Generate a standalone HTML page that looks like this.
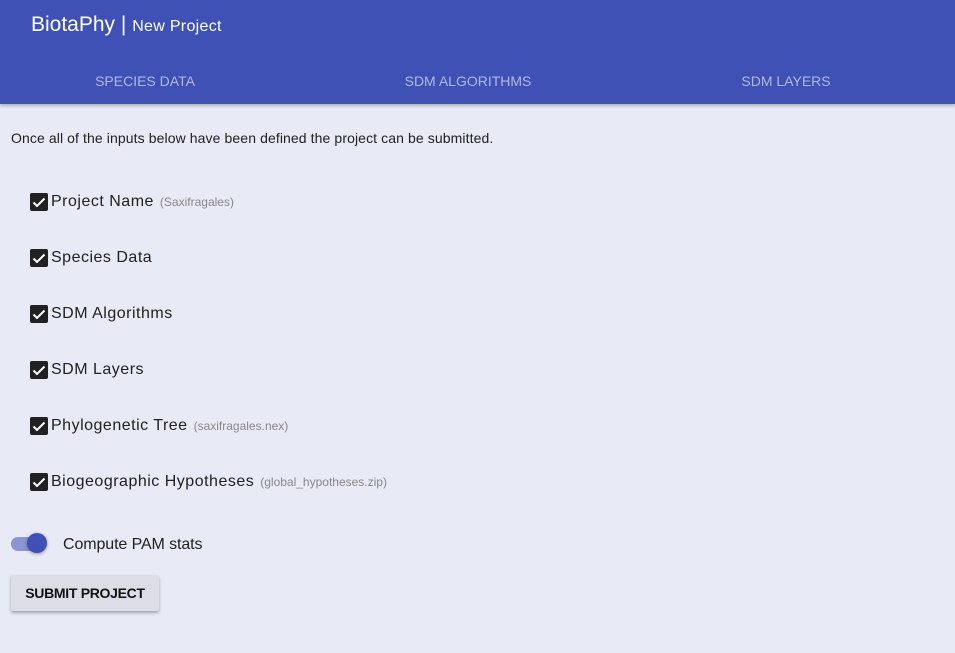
<!DOCTYPE html>
<html><head><style>
body{margin:0;width:955px;height:653px;background:#e8eaf6;font-family:"Liberation Sans",sans-serif;position:relative;overflow:hidden;color:#212121}
.hdr{position:absolute;left:0;top:0;width:955px;height:104px;background:#3f51b5;box-shadow:0 2px 3px rgba(0,0,0,.25)}
.title{position:absolute;left:31px;top:13px;color:#fff;font-size:21px}
.title small{font-size:16px;letter-spacing:.3px}
.tab{position:absolute;top:73px;color:#b0b9e6;font-size:14px;transform:translateX(-50%);white-space:nowrap}
.intro{position:absolute;left:11px;top:130px;font-size:14px;letter-spacing:.1px}
.row{position:absolute;left:30px;height:18px;display:flex;align-items:center;font-size:16px;letter-spacing:.5px;white-space:nowrap}
.cb{width:18px;height:18px;background:#212121;border-radius:2px;margin-right:3px;position:relative}
.cb svg{position:absolute;left:0;top:0}
.hint{font-size:12px;color:#888;margin-left:6px;letter-spacing:0}
.track{position:absolute;left:11px;top:537px;width:34px;height:14px;border-radius:7px;background:#8a95d2}
.knob{position:absolute;left:27px;top:533px;width:20px;height:20px;border-radius:50%;background:#3f51b5;box-shadow:0 1px 3px rgba(0,0,0,.4)}
.pam{position:absolute;left:63px;top:536px;font-size:16px;letter-spacing:-.1px}
.btn{position:absolute;left:11px;top:575px;width:148px;height:36px;background:#dcdde6;border-radius:2px;box-shadow:0 2px 3px rgba(0,0,0,.3);font-size:14px;font-weight:bold;text-align:center;line-height:36px;color:#111;letter-spacing:-.3px}
</style></head><body>
<div class="hdr">
<div class="title">BiotaPhy | <small>New Project</small></div>
<div class="tab" style="left:145px">SPECIES DATA</div>
<div class="tab" style="left:468px">SDM ALGORITHMS</div>
<div class="tab" style="left:786px">SDM LAYERS</div>
</div>
<div class="intro">Once all of the inputs below have been defined the project can be submitted.</div>
<div class="row" style="top:193px"><div class="cb"><svg width="18" height="18"><path d="M3.5 9.5l3.5 3.5 7.5-7.5" stroke="#fff" stroke-width="2" fill="none"/></svg></div>Project Name<span class="hint">(Saxifragales)</span></div>
<div class="row" style="top:249px"><div class="cb"><svg width="18" height="18"><path d="M3.5 9.5l3.5 3.5 7.5-7.5" stroke="#fff" stroke-width="2" fill="none"/></svg></div>Species Data</div>
<div class="row" style="top:305px"><div class="cb"><svg width="18" height="18"><path d="M3.5 9.5l3.5 3.5 7.5-7.5" stroke="#fff" stroke-width="2" fill="none"/></svg></div>SDM Algorithms</div>
<div class="row" style="top:361px"><div class="cb"><svg width="18" height="18"><path d="M3.5 9.5l3.5 3.5 7.5-7.5" stroke="#fff" stroke-width="2" fill="none"/></svg></div>SDM Layers</div>
<div class="row" style="top:417px"><div class="cb"><svg width="18" height="18"><path d="M3.5 9.5l3.5 3.5 7.5-7.5" stroke="#fff" stroke-width="2" fill="none"/></svg></div>Phylogenetic Tree<span class="hint">(saxifragales.nex)</span></div>
<div class="row" style="top:473px"><div class="cb"><svg width="18" height="18"><path d="M3.5 9.5l3.5 3.5 7.5-7.5" stroke="#fff" stroke-width="2" fill="none"/></svg></div>Biogeographic Hypotheses<span class="hint">(global_hypotheses.zip)</span></div>
<div class="track"></div><div class="knob"></div>
<div class="pam">Compute PAM stats</div>
<div class="btn">SUBMIT PROJECT</div>
</body></html>
